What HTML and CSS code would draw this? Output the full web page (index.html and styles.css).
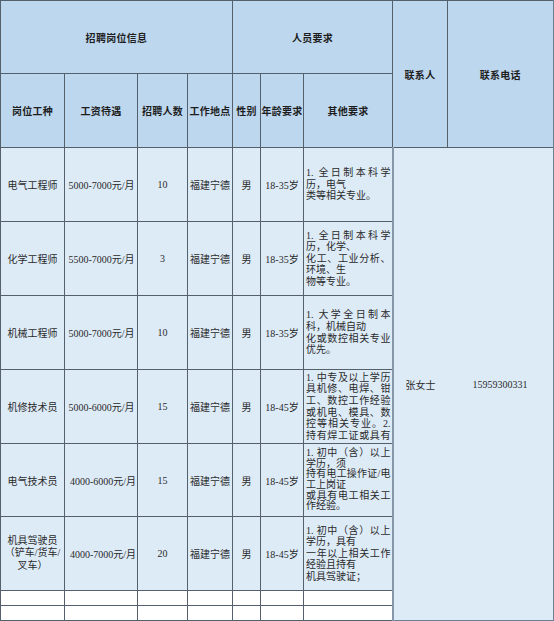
FILE: index.html
```html
<!DOCTYPE html>
<html lang="zh">
<head>
<meta charset="utf-8">
<title>招聘岗位信息</title>
<link rel="stylesheet" href="styles.css">
</head>
<body>
<table class="sheet">
  <colgroup>
    <col class="c1"><col class="c2"><col class="c3"><col class="c4"><col class="c5"><col class="c6"><col class="c7"><col class="c8"><col class="c9">
  </colgroup>
  <thead>
    <tr class="h1">
      <th colspan="4">招聘岗位信息</th>
      <th colspan="3">人员要求</th>
      <th rowspan="2">联系人</th>
      <th rowspan="2" class="last">联系电话</th>
    </tr>
    <tr class="h2">
      <th>岗位工种</th>
      <th>工资待遇</th>
      <th>招聘人数</th>
      <th>工作地点</th>
      <th>性别</th>
      <th>年龄要求</th>
      <th>其他要求</th>
    </tr>
  </thead>
  <tbody>
    <tr class="r74">
      <td>电气工程师</td>
      <td class="pay"><div class="clip">5000-7000元/月</div></td>
      <td>10</td>
      <td>福建宁德</td>
      <td>男</td>
      <td>18-35岁</td>
      <td class="req"><div class="j">1. 全日制本科学</div><div>历，电气</div><div>类等相关专业。</div></td>
      <td class="contact name" rowspan="8">张女士</td>
      <td class="contact phone" rowspan="8">15959300331</td>
    </tr>
    <tr class="r74">
      <td>化学工程师</td>
      <td class="pay"><div class="clip">5500-7000元/月</div></td>
      <td>3</td>
      <td>福建宁德</td>
      <td>男</td>
      <td>18-35岁</td>
      <td class="req"><div class="j">1. 全日制本科学</div><div>历，化学、</div><div class="j">化工、工业分析、</div><div>环境、生</div><div>物等专业。</div></td>
    </tr>
    <tr class="r74">
      <td>机械工程师</td>
      <td class="pay"><div class="clip">5000-7000元/月</div></td>
      <td>10</td>
      <td>福建宁德</td>
      <td>男</td>
      <td>18-35岁</td>
      <td class="req"><div class="j">1. 大学全日制本</div><div>科，机械自动</div><div class="j">化或数控相关专业</div><div>优先。</div></td>
    </tr>
    <tr class="r74">
      <td>机修技术员</td>
      <td class="pay"><div class="clip">5000-6000元/月</div></td>
      <td>15</td>
      <td>福建宁德</td>
      <td>男</td>
      <td>18-45岁</td>
      <td class="req"><div class="j">1. 中专及以上学历</div><div class="j">具机修、电焊、钳</div><div class="j">工、数控工作经验</div><div class="j">或机电、模具、数</div><div class="j">控等相关专业。2.</div><div class="j">持有焊工证或具有</div></td>
    </tr>
    <tr class="r73">
      <td>电气技术员</td>
      <td class="pay"><div class="clip left">4000-6000元/月</div></td>
      <td>15</td>
      <td>福建宁德</td>
      <td>男</td>
      <td>18-45岁</td>
      <td class="req tight"><div class="j">1. 初中（含）以上</div><div>学历，须</div><div class="j">持有电工操作证/电</div><div>工上岗证</div><div class="j">或具有电工相关工</div><div>作经验。</div></td>
    </tr>
    <tr class="r74">
      <td class="multi">机具驾驶员<br>（铲车/货车/<br>叉车）</td>
      <td class="pay"><div class="clip left">4000-7000元/月</div></td>
      <td>20</td>
      <td>福建宁德</td>
      <td>男</td>
      <td>18-45岁</td>
      <td class="req"><div class="j">1. 初中（含）以上</div><div>学历，具有</div><div class="j">一年以上相关工作</div><div>经验且持有</div><div>机具驾驶证；</div></td>
    </tr>
    <tr class="blank">
      <td></td><td></td><td></td><td></td><td></td><td></td><td></td>
    </tr>
    <tr class="blank">
      <td></td><td></td><td></td><td></td><td></td><td></td><td></td>
    </tr>
  </tbody>
</table>
</body>
</html>
```

FILE: styles.css
```css
html, body {
  margin: 0;
  padding: 0;
  background: #ffffff;
}

.sheet {
  border-collapse: collapse;
  table-layout: fixed;
  width: 553px;
  font-family: "Liberation Serif", "Noto Sans CJK SC", serif;
  font-size: 10px;
  color: #2a2a2a;
}

.c1 { width: 64px; }
.c2 { width: 73px; }
.c3 { width: 50px; }
.c4 { width: 45px; }
.c5 { width: 28px; }
.c6 { width: 43px; }
.c7 { width: 89px; }
.c8 { width: 55px; }
.c9 { width: 106px; }

.sheet th,
.sheet td {
  border: 1px solid #55606d;
  padding: 0;
  text-align: center;
  vertical-align: middle;
  overflow: hidden;
  white-space: nowrap;
}

.sheet th {
  background: #bdd7ee;
  font-weight: bold;
  color: #1e1e1e;
  letter-spacing: 0.3px;
}

.sheet th.last {
  border-right: 2px solid #6d7f93;
}

.h1 th { height: 72px; }
.h2 th { height: 73px; }

.r74 td { height: 73px; background: #ddebf7; }
.r73 td { height: 72px; background: #ddebf7; }

.blank td { height: 14px; background: #ffffff; }

.sheet td.contact {
  background: #ddebf7;
  border-bottom: 1px solid #6d7f93;
}

.sheet td.contact.name {
  border-left: 2px solid #8797aa;
  border-right: none;
}

.sheet td.contact.phone {
  border-left: none;
  border-right: 2px solid #6d7f93;
}

.pay .clip {
  width: 73px;
  overflow: hidden;
  white-space: nowrap;
  text-align: center;
}

.pay .clip.left {
  text-align: left;
  padding-left: 5px;
  box-sizing: border-box;
}

.multi {
  white-space: normal;
  line-height: 12.5px;
}

.sheet td.req {
  text-align: left;
  white-space: nowrap;
  padding: 0 1px 0 2px;
  line-height: 11.6px;
}

.sheet td.req.tight {
  line-height: 10.6px;
}

.req .j {
  text-align: justify;
  text-align-last: justify;
}
```
